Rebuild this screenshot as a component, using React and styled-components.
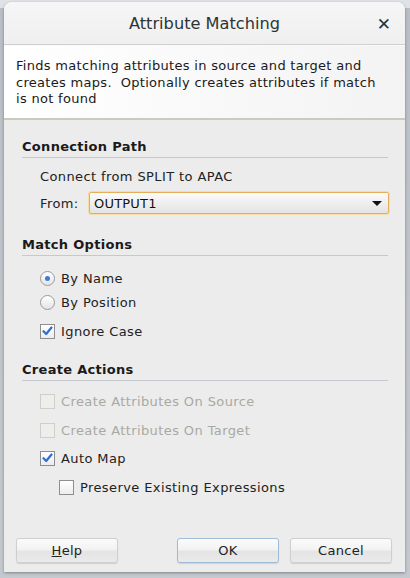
import React from 'react'
import styled, { createGlobalStyle } from 'styled-components'

const GlobalStyle = createGlobalStyle`
  html, body {
    margin: 0;
    padding: 0;
    width: 410px;
    height: 578px;
    overflow: hidden;
    background: #c9ced3;
    font-family: "DejaVu Sans", "Liberation Sans", sans-serif;
  }
`

const Desktop = styled.div`
  width: 410px;
  height: 578px;
  padding: 2px 5px 0 4px;
  box-sizing: border-box;
  background: linear-gradient(#dfe3e8 0, #dfe3e8 8px, #b9bfc6 8px, #c4c9cf 100%);
`

const Dialog = styled.div`
  width: 401px;
  height: 570px;
  display: flex;
  flex-direction: column;
  background: #ececec;
  border-radius: 8px 8px 0 0;
  box-shadow: 0 1px 3px rgba(0, 0, 0, 0.35);
  overflow: hidden;
`

const TitleBar = styled.div`
  height: 42px;
  flex: none;
  display: flex;
  align-items: center;
  justify-content: center;
  position: relative;
  background: linear-gradient(#f6f6f6, #efefef);
  border-bottom: 1px solid #cfcfcf;
  font-size: 16.2px;
  font-weight: 500;
  color: #2e3436;
`

const Close = styled.span`
  position: absolute;
  right: 14px;
  top: 12px;
  font-size: 17px;
  font-weight: bold;
  color: #2e3436;
`

const Intro = styled.div`
  flex: none;
  height: 75px;
  padding: 12px 18px 0 12px;
  box-sizing: border-box;
  background: linear-gradient(90deg, #ffffff 0%, #f3f3f3 100%);
  border-top: 1px solid #fafafa;
  border-bottom: 2px solid #c9cbbd;
  font-size: 13px;
  letter-spacing: 0.3px;
  line-height: 16.5px;
  color: #1a1a1a;
`

const Body = styled.div`
  flex: 1;
  display: flex;
  flex-direction: column;
  padding: 19px 17px 0 18px;
`

const SectionTitle = styled.div`
  font-size: 13px;
  letter-spacing: 0.3px;
  font-weight: bold;
  color: #1a1a1a;
  padding-bottom: 3px;
  border-bottom: 1px solid #c5c8cc;
  margin-top: ${({ $top }) => $top || 0}px;
`

const Line = styled.div`
  display: flex;
  align-items: center;
  height: ${({ $tall }) => ($tall ? 22 : 18)}px;
  margin-top: ${({ $top }) => $top}px;
  padding-left: ${({ $indent }) => $indent || 18}px;
  font-size: 13px;
  color: ${({ $disabled }) => ($disabled ? '#a9a9a2' : '#222')};
  letter-spacing: 0.4px;
`

const Label = styled.span`
  width: 49px;
`

const Select = styled.div`
  flex: 1;
  height: 22px;
  display: flex;
  align-items: center;
  justify-content: space-between;
  padding: 0 6px 0 4px;
  box-sizing: border-box;
  border: 1px solid #e7ae5a;
  box-shadow: 0 0 0 1px #f8dca8;
  border-radius: 2px;
  background: linear-gradient(#fbfbfb, #e3e3e3);
  color: #111;
  letter-spacing: 0.2px;
  margin-right: -1px;
`

const Caret = styled.span`
  width: 0;
  height: 0;
  border-left: 5px solid transparent;
  border-right: 5px solid transparent;
  border-top: 5px solid #111;
`

const Radio = styled.span`
  width: 13px;
  height: 13px;
  border-radius: 50%;
  border: 1px solid #9a9a9a;
  background: linear-gradient(#ffffff, #e4e4e4);
  margin-right: 6px;
  flex: none;
  display: flex;
  align-items: center;
  justify-content: center;
  &::after {
    content: '';
    width: 5px;
    height: 5px;
    border-radius: 50%;
    background: ${({ $on }) => ($on ? '#3f7bd6' : 'transparent')};
  }
`

const Box = styled.span`
  width: 13px;
  height: 13px;
  border: 1px solid ${({ $disabled }) => ($disabled ? '#cfcfca' : '#8e8e8e')};
  background: ${({ $disabled }) => ($disabled ? '#eeeeec' : 'linear-gradient(#ffffff, #ececec)')};
  margin-right: 6px;
  flex: none;
  display: flex;
  align-items: center;
  justify-content: center;
`

const Buttons = styled.div`
  margin-top: auto;
  display: flex;
  padding: 0 13px 9px 12px;
`

const Button = styled.div`
  width: 102px;
  height: 25px;
  display: flex;
  align-items: center;
  justify-content: center;
  box-sizing: border-box;
  border: 1px solid ${({ $focus }) => ($focus ? '#9fbcd8' : '#cfcfcf')};
  border-radius: 3px;
  background: linear-gradient(#fbfbfb 0%, #f3f3f3 45%, #e4e4e4 55%, #eaeaea 100%);
  box-shadow: 0 1px 1px rgba(0, 0, 0, 0.12);
  font-size: 13px;
  letter-spacing: 0.3px;
  color: #222;
  margin-left: ${({ $gap }) => $gap || 0}px;
  u {
    text-decoration: underline;
  }
`

const Tick = () => (
  <svg width="11" height="10" viewBox="0 0 11 10">
    <path d="M1.5 5.2 L4.2 8 L9.5 1.5" fill="none" stroke="#2f6fd0" strokeWidth="2.2" strokeLinecap="round" strokeLinejoin="round" />
  </svg>
)

function Check({ on, disabled }) {
  return <Box $disabled={disabled}>{on && <Tick />}</Box>
}

export default function App() {
  return (
    <>
      <GlobalStyle />
      <Desktop>
        <Dialog>
          <TitleBar>
            Attribute Matching
            <Close>✕</Close>
          </TitleBar>
          <Intro>
            Finds matching attributes in source and target and creates maps.&nbsp; Optionally creates attributes if match is not found
          </Intro>
          <Body>
            <SectionTitle>Connection Path</SectionTitle>
            <Line $top={9}>Connect from SPLIT to APAC</Line>
            <Line $top={7} $tall>
              <Label>From:</Label>
              <Select>
                OUTPUT1
                <Caret />
              </Select>
            </Line>

            <SectionTitle $top={23}>Match Options</SectionTitle>
            <Line $top={13}><Radio $on />By Name</Line>
            <Line $top={6}><Radio />By Position</Line>
            <Line $top={11}><Check on />Ignore Case</Line>

            <SectionTitle $top={22}>Create Actions</SectionTitle>
            <Line $top={11} $disabled><Check disabled />Create Attributes On Source</Line>
            <Line $top={11} $disabled><Check disabled />Create Attributes On Target</Line>
            <Line $top={10}><Check on />Auto Map</Line>
            <Line $top={11} $indent={37}><Check />Preserve Existing Expressions</Line>
          </Body>
          <Buttons>
            <Button><u>H</u>elp</Button>
            <Button $focus $gap={59}>OK</Button>
            <Button $gap={11}>Cancel</Button>
          </Buttons>
        </Dialog>
      </Desktop>
    </>
  )
}
